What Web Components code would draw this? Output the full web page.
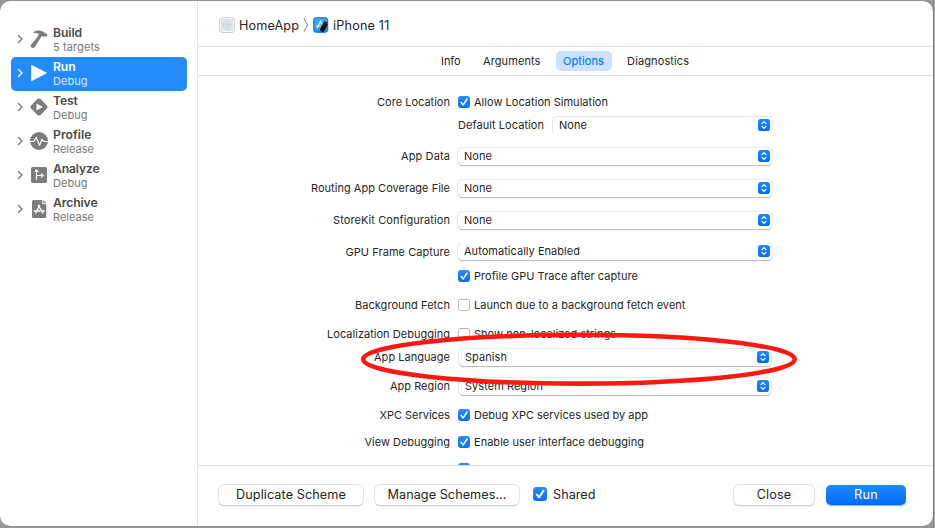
<!DOCTYPE html>
<html lang="en">
<head>
<meta charset="utf-8">
<title>Scheme Editor</title>
<style>
html,body{margin:0;height:100%;overflow:hidden}
body{font-family:Inter,"Liberation Sans",sans-serif;font-size:11px;color:#262626;background:#a9a9a9}
</style>
</head>
<body>
<scheme-editor></scheme-editor>
<script>
function define(name, html, setup) {
  const t = document.createElement('template');
  t.innerHTML = html;
  customElements.define(name, class extends HTMLElement {
    connectedCallback() {
      if (this.shadowRoot) return;
      this.attachShadow({mode: 'open'}).append(t.content.cloneNode(true));
      if (setup) setup(this, this.shadowRoot);
    }
  });
}

/* A single line of text; "w" is its width in pixels, reached by tracking. */
define('fit-text', `<style>:host{display:inline-block;white-space:nowrap;line-height:16px}span{display:inline-block}</style><span><slot></slot></span>`,
  (el, root) => {
    const w = parseFloat(el.getAttribute('w'));
    const s = root.querySelector('span');
    if (!w) return;
    const n = el.textContent.length;
    const ls = (w - s.getBoundingClientRect().width) / n;
    s.style.letterSpacing = ls.toFixed(3) + 'px';
  });

define('check-box', `<style>
:host{display:flex;align-items:center;gap:4px}
i{box-sizing:border-box;display:block;width:12px;height:12px;border-radius:3px;background:#fff;border:1px solid #c3c3c3;border-top-color:#b5b5b5;flex:none}
svg{display:none;width:100%;height:100%}
:host([checked]) i{border:0;background:linear-gradient(#2a8cff,#0170fb)}
:host([checked]) svg{display:block}
:host([large]){gap:6px}
:host([large]) i{width:14px;height:14px;border-radius:3.5px}
</style><i><svg viewBox="0 0 12 12"><path d="M3.2 6.4 5.2 8.9 9 3.1" fill="none" stroke="#fff" stroke-width="1.6" stroke-linecap="round" stroke-linejoin="round"/></svg></i><slot></slot>`);

define('pop-up', `<style>
:host{display:flex;box-sizing:border-box;height:17px;width:314px;align-items:center;justify-content:space-between;padding:0 2px 0 6px;border-radius:4.5px;background:#fff;box-shadow:0 0 0 .6px #dcdcdc,0 .7px .8px #999}
:host([narrow]){width:219px}
:host([inset]){width:312px;margin-left:1px}
:host([flat]){box-shadow:0 0 0 .7px #dcdcdc;clip-path:inset(-1px -1px .5px -1px)}
:host([topless]){clip-path:inset(.5px -2px -3px -2px)}
svg{display:block;width:12px;height:12px}
</style><slot></slot><svg viewBox="0 0 12 12"><defs><linearGradient id="g" x2="0" y2="1"><stop stop-color="#2188ff"/><stop offset="1" stop-color="#016ffa"/></linearGradient></defs><rect width="12" height="12" rx="2.8" fill="url(#g)"/><path d="M4 4.6 6 2.7 8 4.6M4 7.4 6 9.3 8 7.4" fill="none" stroke="#fff" stroke-width="1.2" stroke-linecap="round" stroke-linejoin="round"/></svg>`);

define('form-row', `<style>
:host{display:grid;grid-template-columns:252px 1fr;column-gap:8px;height:18px;align-items:center}
.l{display:flex;justify-content:flex-end}
:host([low]) .l{padding-top:2px}
.c{display:flex;align-items:center}
</style><div class="l"><slot name="label"></slot></div><div class="c"><slot></slot></div>`);

define('push-button', `<style>
:host{display:flex;box-sizing:border-box;width:144px;height:20px;align-items:center;justify-content:center;border-radius:5px;background:#fff;padding-bottom:1px;box-shadow:0 0 0 .7px #dcdcdc,0 .8px 1px #999}
:host([small]){width:80px}
:host([primary]){background:linear-gradient(#2089ff,#006cfb);color:#fff;box-shadow:0 .5px 1px #7fb3f5}
</style><slot></slot>`);

define('tab-item', `<style>
:host{display:flex;box-sizing:border-box;height:20px;padding:0 7.5px;align-items:center;border-radius:5px}
:host([active]){background:#cce2ff;color:#007aff;-webkit-text-stroke:.15px #007aff}
</style><slot></slot>`);

define('action-row', `<style>
:host{display:flex;box-sizing:border-box;width:176px;height:34px;align-items:center;border-radius:5px;color:#4a4a4a;padding-left:6px}
:host([selected]){background:#248bfa;color:#fff;--sub:#d8eaff;--icon:#fff;--chev:#fff}
.chev{width:7px;height:10px;margin:0 6px 2px 0;color:var(--chev,#777)}
.icon{display:flex;width:18px;height:20px;margin:0 5px 2px 0;color:var(--icon,#7c7c7c)}
.t{display:flex;flex-direction:column;font-size:12.2px;font-weight:600}
.s{font-size:11px;font-weight:400;color:var(--sub,#787878);margin-top:-2px}
.t,.s{line-height:16px}
</style><svg class="chev" viewBox="0 0 7 10"><path d="M1.5 1.5 5 5 1.5 8.5" fill="none" stroke="currentColor" stroke-width="1.4" stroke-linecap="round" stroke-linejoin="round"/></svg><span class="icon"><slot name="icon"></slot></span><span class="t"><slot></slot><span class="s"><slot name="sub"></slot></span></span>`);

define('action-list', `<style>
:host{display:flex;flex-direction:column;box-sizing:border-box;width:197px;padding:22px 0 0 11px}
svg{width:18px;height:20px;display:block}
</style>
<action-row><svg slot="icon" viewBox="0 0 18 20"><path d="M3.400 3.200C6 1 9.800.8 13.100 2.600L15.200 4.300 17.500 5.300 16.600 8 15.200 7.200 13.700 7.900 12 6.700 10 9.800 4.600 18.300Q3.200 19.500 1.500 18.500 .1 17.400 1 15.800L7.300 8.200 9 5Q6.800 3.400 3.600 4.100Z" fill="currentColor"/></svg><fit-text w="29">Build</fit-text><fit-text slot="sub" w="47">5 targets</fit-text></action-row>
<action-row selected><svg slot="icon" viewBox="0 0 18 20"><path d="M1.600 2.300 16.400 10 1.600 17.800Z" fill="currentColor" stroke="currentColor" stroke-width=".8" stroke-linejoin="round"/></svg><fit-text w="22.500">Run</fit-text><fit-text slot="sub" w="34.500">Debug</fit-text></action-row>
<action-row><svg slot="icon" viewBox="0 0 18 20"><rect x="2.300" y="3.300" width="13.400" height="13.400" rx="2.600" fill="currentColor" transform="rotate(45 9 10)"/><path d="M6.500 6.500 12.800 10 6.500 13.600Z" fill="#fff"/></svg><fit-text w="24.500">Test</fit-text><fit-text slot="sub" w="34.500">Debug</fit-text></action-row>
<action-row><svg slot="icon" viewBox="0 0 18 20"><circle cx="9" cy="10" r="9" fill="currentColor"/><path d="M0 10.500H3.700L6.200 6.500 9.500 14.300 12 8.300 13.700 10.500H18" fill="none" stroke="#fff" stroke-width="1.200" stroke-linejoin="round"/></svg><fit-text w="38.500">Profile</fit-text><fit-text slot="sub" w="41">Release</fit-text></action-row>
<action-row><svg slot="icon" viewBox="0 0 18 20"><rect x="1" y="2" width="16" height="16" rx="1.800" fill="currentColor"/><path d="M6.500 14.800V6M4.700 7 6.500 4.900 8.300 7M6.500 10.500H12M11 8.700 13.500 10.500 11 12.400" fill="none" stroke="#fff" stroke-width="1.100"/></svg><fit-text w="46.500">Analyze</fit-text><fit-text slot="sub" w="34.500">Debug</fit-text></action-row>
<action-row><svg slot="icon" viewBox="0 0 18 20"><path d="M3.500 1H12.300V5.200H16.300V17.500Q16.300 19 14.800 19H3.500Q2 19 2 17.500V2.500Q2 1 3.500 1ZM13.300 1 16.300 4.200H13.300Z" fill="currentColor"/><path d="M9.800 6 5.500 14.500M8.300 6 13 14.500M3.700 12H10.300M12.200 12H14.700" fill="none" stroke="#fff" stroke-width="1.400"/></svg><fit-text w="44.500">Archive</fit-text><fit-text slot="sub" w="41">Release</fit-text></action-row>`);

define('path-bar', `<style>
:host{display:flex;box-sizing:border-box;height:46px;align-items:center;padding:3px 0 0 21px;border-bottom:1px solid #e2e2e2;font-size:12.700px}
svg{display:block;flex:none}
fit-text{margin:2px 0 0 4px}
</style>
<svg width="16" height="16" viewBox="0 0 16 16"><rect x=".5" y=".5" width="15" height="15" rx="3" fill="#f9fafa" stroke="#c9cdd0"/><rect x="2.500" y="2.500" width="11" height="11" fill="#dbe8ec" stroke="#c9dde2" stroke-width=".6"/><circle cx="8" cy="8" r="4" fill="none" stroke="#bdd1d8" stroke-width=".6"/><circle cx="8" cy="8" r="2" fill="none" stroke="#b2cad2" stroke-width=".6"/></svg>
<fit-text w="60">HomeApp</fit-text>
<svg width="8" height="16" viewBox="0 0 8 16" style="margin-left:3px;margin-right:3px"><path d="M2 1.500 5.500 8 2 14.500" fill="none" stroke="#777" stroke-width="1"/></svg>
<svg width="16" height="16" viewBox="0 0 16 16"><defs><linearGradient id="b" x2="0" y2="1"><stop stop-color="#3098e8"/><stop offset="1" stop-color="#168cf0"/></linearGradient></defs><rect x=".4" y=".4" width="14.400" height="15" rx="3" fill="url(#b)" stroke="#176bb4" stroke-width=".8"/><rect x="2" y="2" width="11.300" height="11.500" rx="1" fill="#65b9fa" opacity=".4"/><path d="M8.300 3 4 11M7 4 9 7.500M3 9H7.500" stroke="#e8f5ff" stroke-width="1.200"/><rect x="8.600" y="5.500" width="4.600" height="9.600" rx="1.200" fill="#141414" transform="rotate(28 10.900 10)"/><path d="M10.800 4.800 14.200 6.500" stroke="#222" stroke-width="2"/></svg>
<fit-text w="56.500">iPhone 11</fit-text>`);

define('tab-strip', `<style>
:host{display:flex;box-sizing:border-box;height:29px;align-items:center;padding:0 0 0 235.500px;border-bottom:1px solid #e2e2e2;gap:7.500px}
</style>
<tab-item><fit-text w="19.500">Info</fit-text></tab-item><tab-item><fit-text w="57.500">Arguments</fit-text></tab-item><tab-item active><fit-text w="41">Options</fit-text></tab-item><tab-item style="margin-left:.6px"><fit-text w="62">Diagnostics</fit-text></tab-item>`);

define('options-form', `<style>
:host{display:flex;flex-direction:column;height:389px;overflow:hidden;box-sizing:border-box;padding-top:17px}
.g5{margin-top:5px}.g7{margin-top:7px}.g9{margin-top:9px}.g11{margin-top:11px}.g13{margin-top:13px}.g14{margin-top:14px}
form-row{flex:none}
.in{display:flex;align-items:center;justify-content:space-between;width:314px}
</style>
<form-row><fit-text slot="label" w="73">Core Location</fit-text><check-box checked><fit-text w="134">Allow Location Simulation</fit-text></check-box></form-row>
<form-row class="g5"><div class="in"><fit-text w="86">Default Location</fit-text><pop-up narrow flat><fit-text w="28">None</fit-text></pop-up></div></form-row>
<form-row class="g13"><fit-text slot="label" w="49">App Data</fit-text><pop-up><fit-text w="28">None</fit-text></pop-up></form-row>
<form-row class="g14"><fit-text slot="label" w="139">Routing App Coverage File</fit-text><pop-up><fit-text w="28">None</fit-text></pop-up></form-row>
<form-row class="g14"><fit-text slot="label" w="117">StoreKit Configuration</fit-text><pop-up><fit-text w="28">None</fit-text></pop-up></form-row>
<form-row class="g13" low><fit-text slot="label" w="104.500">GPU Frame Capture</fit-text><pop-up topless><fit-text w="116">Automatically Enabled</fit-text></pop-up></form-row>
<form-row class="g7"><check-box checked><fit-text w="164">Profile GPU Trace after capture</fit-text></check-box></form-row>
<form-row class="g11"><fit-text slot="label" w="95">Background Fetch</fit-text><check-box><fit-text w="211.500">Launch due to a background fetch event</fit-text></check-box></form-row>
<form-row class="g11"><fit-text slot="label" w="123">Localization Debugging</fit-text><check-box><fit-text w="142">Show non-localized strings</fit-text></check-box></form-row>
<form-row class="g5"><fit-text slot="label" w="76">App Language</fit-text><pop-up inset><fit-text w="42">Spanish</fit-text></pop-up></form-row>
<form-row class="g11"><fit-text slot="label" w="60">App Region</fit-text><pop-up inset><fit-text w="78">System Region</fit-text></pop-up></form-row>
<form-row class="g11"><fit-text slot="label" w="70.500">XPC Services</fit-text><check-box checked><fit-text w="174">Debug XPC services used by app</fit-text></check-box></form-row>
<form-row class="g9"><fit-text slot="label" w="85.500">View Debugging</fit-text><check-box checked><fit-text w="170">Enable user interface debugging</fit-text></check-box></form-row>
<form-row class="g9"><check-box checked></check-box></form-row>`);

define('button-bar', `<style>
:host{display:flex;box-sizing:border-box;height:61px;border-top:1px solid #e2e2e2;padding:19px 27px 0 21px;gap:12px;font-size:12.700px}
check-box{height:18px;margin-left:2px}
check-box fit-text{margin-top:2px}
.sp{flex:1}
</style>
<push-button><fit-text w="110">Duplicate Scheme</fit-text></push-button>
<push-button><fit-text w="119">Manage Schemes...</fit-text></push-button>
<check-box checked large><fit-text w="42.500">Shared</fit-text></check-box>
<span class="sp"></span>
<push-button small><fit-text w="34.500">Close</fit-text></push-button>
<push-button small primary><fit-text w="24">Run</fit-text></push-button>`);

define('highlight-ring', `<style>:host{position:absolute;left:356px;top:326px;width:446px;height:66px;pointer-events:none}svg{display:block}</style>
<svg width="446" height="66" viewBox="356 326 446 66"><ellipse cx="579" cy="359.200" rx="215.800" ry="24.400" fill="none" stroke="#fb1a12" stroke-width="4.600"/></svg>`);

define('scheme-editor', `<style>
:host{display:block;box-sizing:border-box;width:935px;height:528px;padding:1px 2px 2px 0;position:relative;background:linear-gradient(90deg,#989898 0 933px,#858585 933px 934px,#aaa 934px)}
.win{display:flex;height:525px;background:#fff;border-radius:10px;overflow:hidden;box-shadow:0 0 1px #555}
main{flex:1;border-left:1px solid #e2e2e2;display:flex;flex-direction:column}
</style>
<div class="win"><action-list></action-list><main><path-bar></path-bar><tab-strip></tab-strip><options-form></options-form><button-bar></button-bar></main></div>
<highlight-ring></highlight-ring>`);
</script>
</body>
</html>
